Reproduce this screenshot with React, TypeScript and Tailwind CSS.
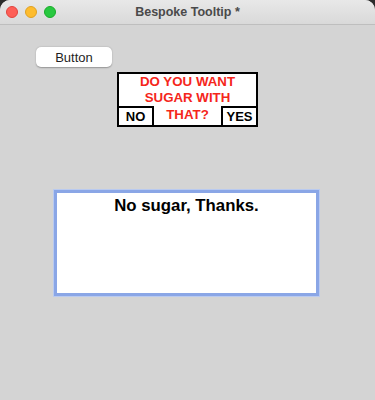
export default function App() {
  return (
    <div
      className="w-[375px] h-[400px] bg-[#2b2b2b] overflow-hidden"
      style={{ fontFamily: '"Liberation Sans", Arial, sans-serif' }}
    >
      <div className="h-full flex flex-col rounded-t-[10px] overflow-hidden bg-[#d4d4d4]">
        {/* title bar */}
        <div className="relative h-[25px] shrink-0 flex items-center bg-gradient-to-b from-[#e8e8e8] to-[#d9d9d9] border-b border-[#bebebe]">
          <div className="flex items-center gap-[7px] pl-[6px]">
            <span className="w-[12px] h-[12px] rounded-full bg-[#fe5f57] border border-[#e0443e]" />
            <span className="w-[12px] h-[12px] rounded-full bg-[#febc2e] border border-[#dea123]" />
            <span className="w-[12px] h-[12px] rounded-full bg-[#28c840] border border-[#1aab29]" />
          </div>
          <div className="absolute inset-0 flex items-center justify-center text-[12.5px] font-bold text-[#4a4a4a]">
            Bespoke Tooltip *
          </div>
        </div>

        {/* content */}
        <div className="flex flex-col items-start">
          <button className="ml-[36px] mt-[22px] w-[76px] h-[20px] rounded-[5px] bg-white text-[13px] leading-none text-[#1f1f1f] shadow-[0_0.5px_1.5px_rgba(0,0,0,0.3)] flex items-center justify-center">
            Button
          </button>

          <div className="ml-[117px] mt-[5px] w-[141px] h-[55px] border-2 border-black bg-white flex flex-col">
            <div className="h-[32px] flex flex-col items-center justify-center text-[13.3px] leading-[16px] font-bold text-[#f5261b]">
              <span>DO YOU WANT</span>
              <span>SUGAR WITH</span>
            </div>
            <div className="flex-1 flex">
              <div className="w-[35px] border-t-2 border-r-2 border-black flex items-center justify-center text-[13px] font-bold text-black leading-none">
                NO
              </div>
              <div className="flex-1 flex items-center justify-center text-[13.3px] font-bold text-[#f5261b] leading-none pb-[1px]">
                THAT?
              </div>
              <div className="w-[35px] border-t-2 border-l-2 border-black flex items-center justify-center text-[13px] font-bold text-black leading-none">
                YES
              </div>
            </div>
          </div>

          <div className="ml-[54px] mt-[63px] w-[265px] h-[106px] bg-white border-[3px] border-[#8aa6e6] shadow-[0_0_0_1px_#b9caf0]">
            <div className="pt-[3px] text-center text-[16.8px] leading-[20px] font-bold text-black">
              No sugar, Thanks.
            </div>
          </div>
        </div>
      </div>
    </div>
  );
}
